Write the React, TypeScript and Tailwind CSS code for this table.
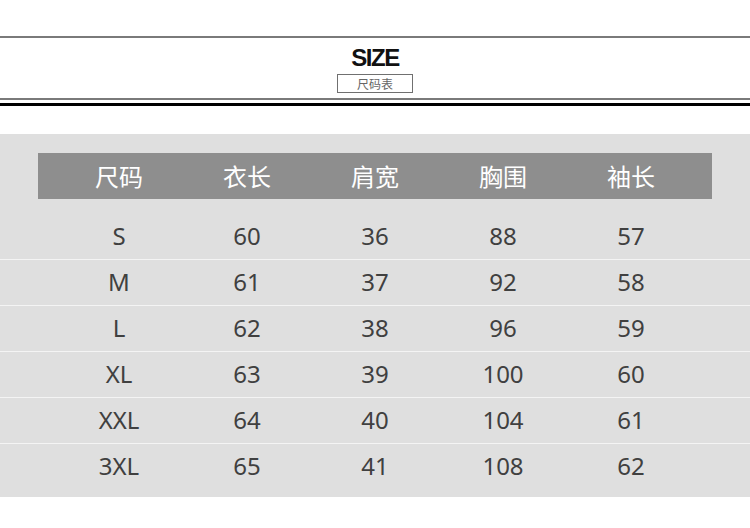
const heads = ['尺码', '衣长', '肩宽', '胸围', '袖长'];

const rows = [
  ['S', '60', '36', '88', '57'],
  ['M', '61', '37', '92', '58'],
  ['L', '62', '38', '96', '59'],
  ['XL', '63', '39', '100', '60'],
  ['XXL', '64', '40', '104', '61'],
  ['3XL', '65', '41', '108', '62'],
];

export default function App() {
  return (
    <div className="w-[750px] h-[528px] bg-white pt-[36px] font-['Noto_Sans','Noto_Sans_CJK_SC',sans-serif]">
      <div className="h-[2px] bg-[#7a7a7a]" />
      <div className="h-[60px] flex flex-col items-center pt-[8px]">
        <div className="text-[24px] leading-[24px] font-bold tracking-[-1.5px] text-[#111] font-['Liberation_Sans','Noto_Sans_CJK_SC',sans-serif]">
          SIZE
        </div>
        <div className="mt-[4px] w-[76px] h-[19px] border border-[#707070] flex items-center justify-center text-[12px] leading-none text-[#666] font-['Noto_Sans_CJK_SC',sans-serif]">
          尺码表
        </div>
      </div>
      <div className="h-[2px] bg-[#7a7a7a]" />
      <div className="h-[3px]" />
      <div className="h-[3px] bg-black" />

      <div className="mt-[28px] bg-[#dfdfdf] pt-[19px] pb-[8px]">
        <div className="mx-[38px] h-[46px] bg-[#8e8e8e] px-[17px] grid grid-cols-5 items-center">
          {heads.map((h) => (
            <div key={h} className="text-center text-white text-[24px] leading-none font-['Noto_Sans_CJK_SC',sans-serif]">
              {h}
            </div>
          ))}
        </div>
        <div className="mt-[15px]">
          {rows.map((r, i) => (
            <div
              key={r[0]}
              className={
                i < rows.length - 1
                  ? 'h-[46px] border-b border-[#f4f4f4] px-[55px] pb-[1px] grid grid-cols-5 items-center'
                  : 'h-[45px] px-[55px] pb-[1px] grid grid-cols-5 items-center'
              }
            >
              {r.map((c, j) => (
                <div key={j} className="text-center text-[24px] leading-none text-[#404040]">
                  {c}
                </div>
              ))}
            </div>
          ))}
        </div>
      </div>
    </div>
  );
}
